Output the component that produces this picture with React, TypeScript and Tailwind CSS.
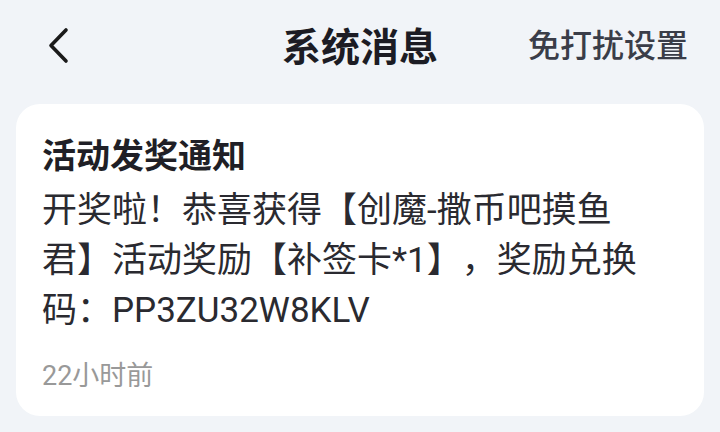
const font = { fontFamily: '"Roboto", "Noto Sans CJK SC", sans-serif' };

function BackArrow() {
    return (
        <svg width="24" height="40" viewBox="0 0 24 40" fill="none">
            <path d="M20 4 L5 19.5 L20 35" stroke="#1a1a1a" strokeWidth="3.6" strokeLinecap="round" strokeLinejoin="round" />
        </svg>
    );
}

export default function App() {
    return (
        <div className="h-[432px] w-[720px] overflow-hidden bg-[#f1f4f8]" style={font}>
            {/* Header */}
            <div className="relative flex h-[96px] items-center justify-center">
                <button className="absolute left-[46px] top-[26px]">
                    <BackArrow />
                </button>
                <h1 className="text-[39px] font-bold leading-none text-[#1c1c24]">系统消息</h1>
                <span className="absolute right-[32px] top-[30px] text-[32px] font-medium leading-none text-[#3a3d48]">免打扰设置</span>
            </div>

            {/* Message card */}
            <div className="mx-4 mt-[8px] rounded-[24px] bg-white pb-[24px] pl-[26px] pr-[44px] pt-[30px]">
                <h2 className="text-[34px] font-bold leading-[44px] text-[#1f1f26]">活动发奖通知</h2>
                <p className="mt-[8px] text-[35px] leading-[50px] text-[#2a2a30] [text-spacing-trim:space-all]">
                    开奖啦！恭喜获得【创魔-撒币吧摸鱼君】活动奖励【补签卡*1】，奖励兑换码：PP3ZU32W8KLV
                </p>
                <p className="mt-[24px] text-[27px] leading-[32px] text-[#999999]">22小时前</p>
            </div>
        </div>
    );
}
